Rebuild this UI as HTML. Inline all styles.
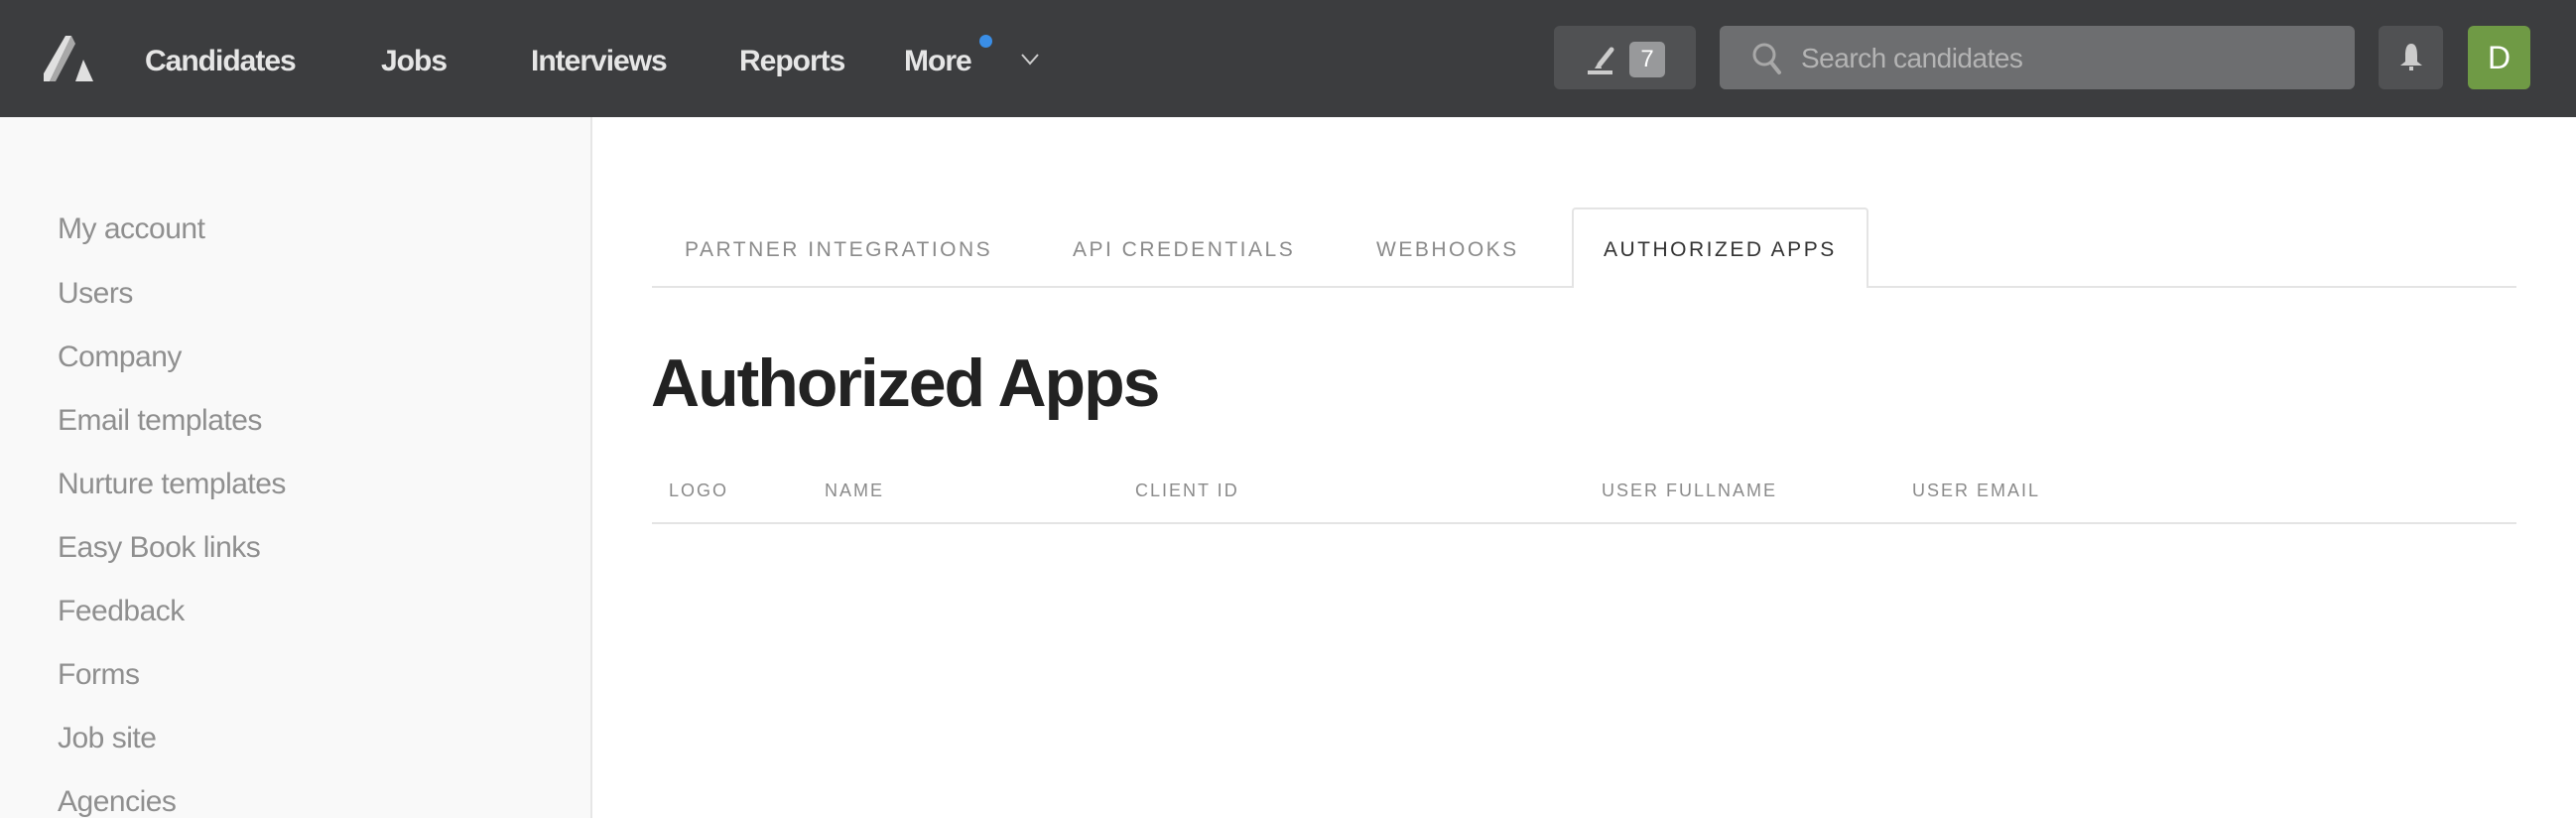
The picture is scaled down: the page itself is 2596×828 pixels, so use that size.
<!DOCTYPE html>
<html><head><meta charset="utf-8"><style>
*{margin:0;padding:0;box-sizing:border-box}
body{width:2596px;height:824px;overflow:hidden;background:#fff;font-family:"Liberation Sans",sans-serif;position:relative}
.hdr{position:absolute;left:0;top:0;width:2596px;height:118px;background:#3c3d3f}
.nav{position:absolute;top:40px;color:#e6e6e6;font-weight:bold;font-size:30px;letter-spacing:-1px;line-height:44px}
.side{position:absolute;left:0;top:118px;width:597px;height:706px;background:#f9f9f9;border-right:2px solid #e6e6e6}
.si{position:absolute;left:58px;font-size:30px;color:#8f8f8f;line-height:40px;letter-spacing:-0.5px}
.tab{position:absolute;top:238px;font-size:21px;letter-spacing:2.5px;color:#8a8a8a;line-height:28px}
.th{position:absolute;top:482px;font-size:18px;letter-spacing:2px;color:#8a8a8a;line-height:24px}
</style></head><body>
<div class="hdr">
<svg style="position:absolute;left:44px;top:34px" width="52" height="50" viewBox="0 0 52 50">
<polygon points="0,40 22,2 28,2 6,48 0,48" fill="#e0e0e0"/>
<polygon points="28,2 32,10 12,48 6,48" fill="#a8a8a8"/>
<polygon points="40,26 50,48 32,48" fill="#e0e0e0"/>
</svg>
<div class="nav" style="left:146px">Candidates</div>
<div class="nav" style="left:384px">Jobs</div>
<div class="nav" style="left:535px">Interviews</div>
<div class="nav" style="left:745px">Reports</div>
<div class="nav" style="left:911px">More</div>
<div style="position:absolute;left:987px;top:35px;width:13px;height:13px;border-radius:50%;background:#3a8ee6"></div>
<svg style="position:absolute;left:1029px;top:54px" width="18" height="12" viewBox="0 0 18 12"><polyline points="1,1 9,10 17,1" fill="none" stroke="#ccc" stroke-width="2"/></svg>
<div style="position:absolute;left:1566px;top:26px;width:143px;height:64px;border-radius:6px;background:#505153">
<svg style="position:absolute;left:34px;top:21px" width="28" height="28" viewBox="0 0 28 28"><line x1="24" y1="3" x2="12" y2="18" stroke="#ccc" stroke-width="5" stroke-linecap="round"/><polygon points="7,22 12,14 14,22" fill="#ccc"/><rect x="0" y="24" width="25" height="4" fill="#ccc"/></svg>
<div style="position:absolute;left:76px;top:16px;width:36px;height:36px;border-radius:5px;background:#98999b;color:#fff;font-size:24px;text-align:center;line-height:36px">7</div>
</div>
<div style="position:absolute;left:1733px;top:26px;width:640px;height:64px;border-radius:6px;background:#6d6e70">
<svg style="position:absolute;left:32px;top:16px" width="32" height="34" viewBox="0 0 32 34"><circle cx="13" cy="13" r="10" fill="none" stroke="#a8a8a8" stroke-width="3"/><line x1="20" y1="21" x2="28" y2="31" stroke="#a8a8a8" stroke-width="4" stroke-linecap="round"/></svg>
<div style="position:absolute;left:82px;top:15px;font-size:28px;color:#b4b4b4;line-height:36px;letter-spacing:-0.5px">Search candidates</div>
</div>
<div style="position:absolute;left:2397px;top:26px;width:65px;height:64px;border-radius:6px;background:#505153">
<svg style="position:absolute;left:20px;top:16px" width="26" height="32" viewBox="0 0 26 32"><path d="M13 2 C8 2 7 8 7 14 L7 20 L2 24 L24 24 L19 20 L19 14 C19 8 18 2 13 2Z" fill="#ccc"/><rect x="11" y="25" width="4" height="4" fill="#ccc"/></svg>
</div>
<div style="position:absolute;left:2487px;top:26px;width:63px;height:64px;border-radius:6px;background:#6f9a45;color:#fff;font-size:32px;text-align:center;line-height:64px">D</div>
</div>
<div class="side">
<div class="si" style="top:93px">My account</div>
<div class="si" style="top:158px">Users</div>
<div class="si" style="top:222px">Company</div>
<div class="si" style="top:286px">Email templates</div>
<div class="si" style="top:350px">Nurture templates</div>
<div class="si" style="top:414px">Easy Book links</div>
<div class="si" style="top:478px">Feedback</div>
<div class="si" style="top:542px">Forms</div>
<div class="si" style="top:606px">Job site</div>
<div class="si" style="top:670px">Agencies</div>
</div>
<div style="position:absolute;left:657px;top:288px;width:1879px;height:2px;background:#e4e4e4"></div>
<div style="position:absolute;left:1584px;top:209px;width:299px;height:81px;background:#fff;border:2px solid #e4e4e4;border-bottom:none;border-radius:4px 4px 0 0"></div>
<div class="tab" style="left:690px">PARTNER INTEGRATIONS</div>
<div class="tab" style="left:1081px">API CREDENTIALS</div>
<div class="tab" style="left:1387px">WEBHOOKS</div>
<div class="tab" style="left:1616px;color:#333">AUTHORIZED APPS</div>
<div style="position:absolute;left:656px;top:346px;font-size:68px;font-weight:bold;color:#222;letter-spacing:-2px;line-height:80px">Authorized Apps</div>
<div class="th" style="left:674px">LOGO</div>
<div class="th" style="left:831px">NAME</div>
<div class="th" style="left:1144px">CLIENT ID</div>
<div class="th" style="left:1614px">USER FULLNAME</div>
<div class="th" style="left:1927px">USER EMAIL</div>
<div style="position:absolute;left:657px;top:526px;width:1879px;height:2px;background:#e4e4e4"></div>
</body></html>
